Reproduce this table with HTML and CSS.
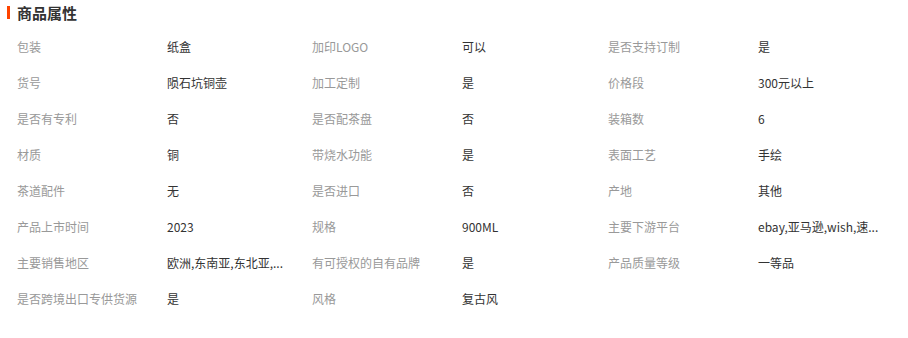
FILE: index.html
```html
<!DOCTYPE html>
<html lang="zh">
<head>
<meta charset="utf-8">
<link rel="stylesheet" href="styles.css">
</head>
<body>
<div class="panel">
  <div class="title"><span class="bar"></span><span class="title-text">商品属性</span></div>
  <div class="grid">
    <div class="k">包装</div><div class="v">纸盒</div>
    <div class="k">加印LOGO</div><div class="v">可以</div>
    <div class="k">是否支持订制</div><div class="v">是</div>

    <div class="k">货号</div><div class="v">陨石坑铜壶</div>
    <div class="k">加工定制</div><div class="v">是</div>
    <div class="k">价格段</div><div class="v">300元以上</div>

    <div class="k">是否有专利</div><div class="v">否</div>
    <div class="k">是否配茶盘</div><div class="v">否</div>
    <div class="k">装箱数</div><div class="v">6</div>

    <div class="k">材质</div><div class="v">铜</div>
    <div class="k">带烧水功能</div><div class="v">是</div>
    <div class="k">表面工艺</div><div class="v">手绘</div>

    <div class="k">茶道配件</div><div class="v">无</div>
    <div class="k">是否进口</div><div class="v">否</div>
    <div class="k">产地</div><div class="v">其他</div>

    <div class="k">产品上市时间</div><div class="v">2023</div>
    <div class="k">规格</div><div class="v">900ML</div>
    <div class="k">主要下游平台</div><div class="v">ebay,亚马逊,wish,速...</div>

    <div class="k">主要销售地区</div><div class="v">欧洲,东南亚,东北亚,...</div>
    <div class="k">有可授权的自有品牌</div><div class="v">是</div>
    <div class="k">产品质量等级</div><div class="v">一等品</div>

    <div class="k">是否跨境出口专供货源</div><div class="v">是</div>
    <div class="k">风格</div><div class="v">复古风</div>
  </div>
</div>
</body>
</html>
```
FILE: styles.css
```css
html, body {
  margin: 0;
  padding: 0;
  background: #fff;
}
body {
  font-family: "Noto Sans CJK SC", "Noto Sans", sans-serif;
  font-size: 12px;
  color: #333;
}
.panel {
  width: 908px;
}
.title {
  display: flex;
  align-items: flex-start;
  height: 23px;
  padding-top: 5px;
  padding-left: 7px;
}
.bar {
  width: 3px;
  height: 13px;
  background: #ff4400;
  margin-right: 7px;
  margin-top: 1px;
}
.title-text {
  font-size: 15px;
  font-weight: bold;
  color: #333;
  line-height: 15px;
}
.grid {
  display: grid;
  grid-template-columns: 150px 145px 150px 146px 150px 1fr;
  grid-auto-rows: 36px;
  padding-left: 17px;
  margin-top: 1px;
}
.k, .v {
  display: flex;
  align-items: center;
  line-height: 16px;
  white-space: nowrap;
}
.k {
  color: #999;
}
.v {
  color: #333;
}
```
